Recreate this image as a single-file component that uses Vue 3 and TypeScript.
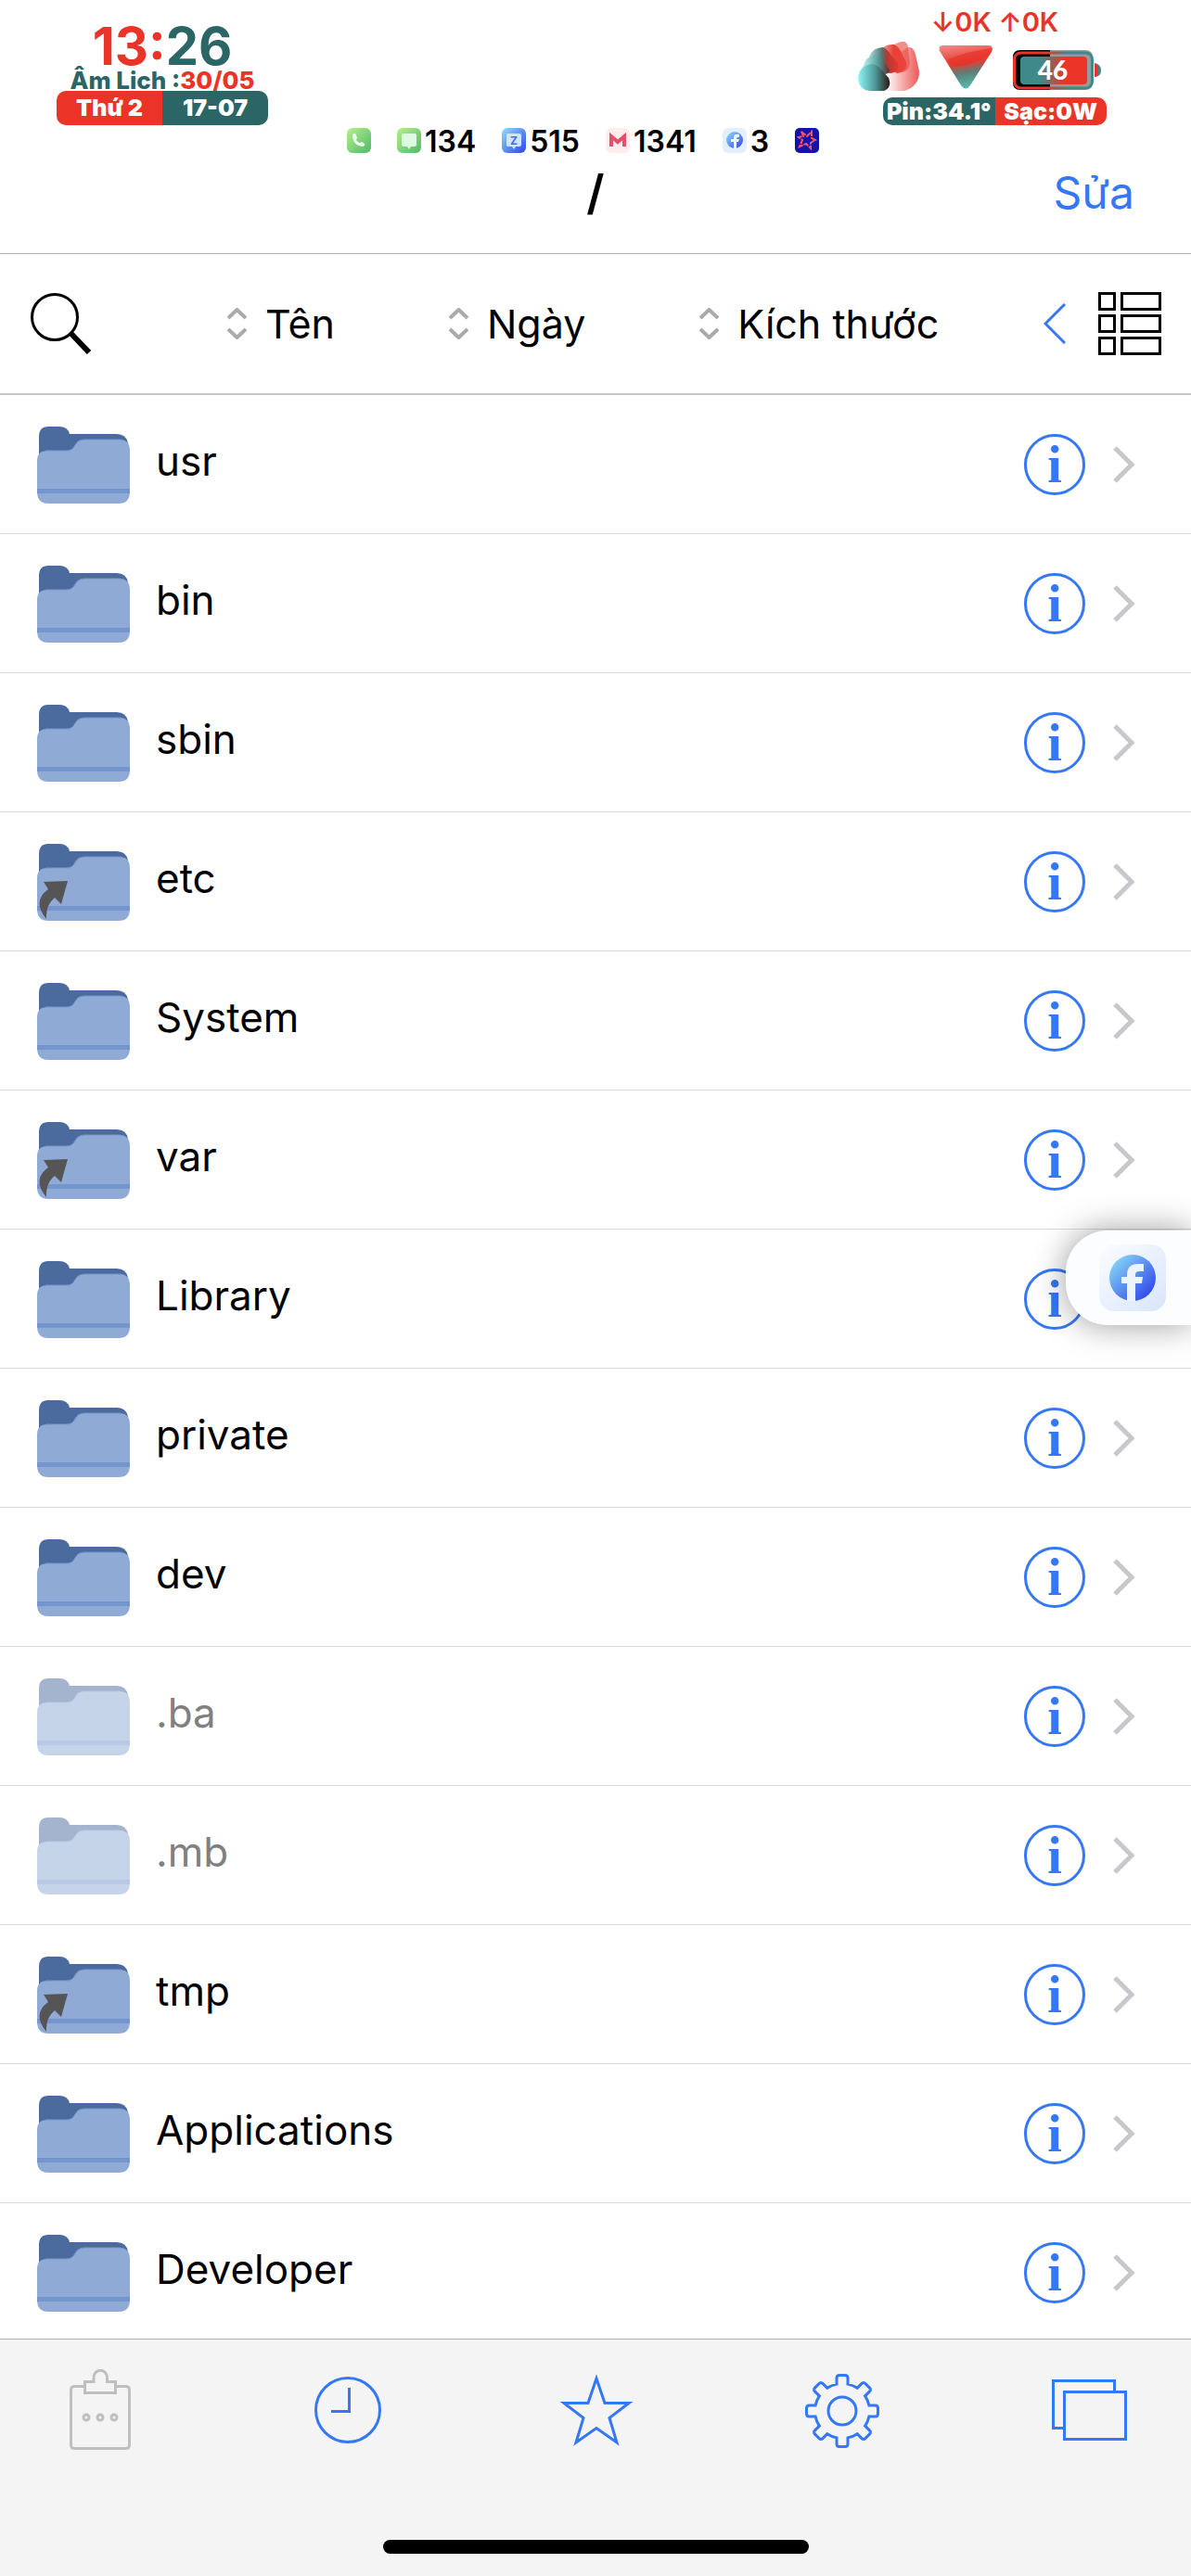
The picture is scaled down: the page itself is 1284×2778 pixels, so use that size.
<script setup lang="ts">
interface FileEntry {
  name: string
  link?: boolean
  hidden?: boolean
}

const files: FileEntry[] = [
  { name: 'usr' },
  { name: 'bin' },
  { name: 'sbin' },
  { name: 'etc', link: true },
  { name: 'System' },
  { name: 'var', link: true },
  { name: 'Library' },
  { name: 'private' },
  { name: 'dev' },
  { name: '.ba', hidden: true },
  { name: '.mb', hidden: true },
  { name: 'tmp', link: true },
  { name: 'Applications' },
  { name: 'Developer' },
]

const sorts: string[] = ['Tên', 'Ngày', 'Kích thước']

/* Outline of an eight-toothed gear with softened tooth corners. */
function gearPath(cx: number, cy: number): string {
  const body = 29.5
  const tip = 38.5
  const half = 6
  const round = 3
  const base = Math.sqrt(body * body - half * half)
  const parts: string[] = []
  for (let i = 0; i < 8; i++) {
    const a = (i * Math.PI) / 4
    const at = (x: number, r: number): string => {
      const px = cx + x * Math.cos(a) + r * Math.sin(a)
      const py = cy + x * Math.sin(a) - r * Math.cos(a)
      return `${px.toFixed(2)} ${py.toFixed(2)}`
    }
    parts.push(i === 0 ? `M${at(-half, base)}` : `A${body} ${body} 0 0 1 ${at(-half, base)}`)
    parts.push(`L${at(-half, tip - round)}Q${at(-half, tip)} ${at(-half + round, tip)}`)
    parts.push(`L${at(half - round, tip)}Q${at(half, tip)} ${at(half, tip - round)}L${at(half, base)}`)
  }
  const end = `${(cx - half).toFixed(2)} ${(cy - base).toFixed(2)}`
  return `${parts.join('')}A${body} ${body} 0 0 1 ${end}Z`
}

const gear = gearPath(40, 45)
</script>

<template>
  <div class="screen">
    <header class="top">
      <div class="status">
        <div class="clock">
          <div class="time"><span class="red">13:</span><span class="teal">26</span></div>
          <div class="lunar"><span class="teal">Âm Lịch :</span><span class="red">30/05</span></div>
          <div class="pill date-pill"><span class="on-red">Thứ 2</span><span class="on-teal">17-07</span></div>
        </div>

        <div class="notices">
          <span class="notice">
            <svg class="app" viewBox="0 0 26 27" aria-label="Phone">
              <defs>
                <linearGradient id="green" x1="0" y1="0" x2="1" y2="1"><stop offset="0" stop-color="#b5f08a" /><stop offset="1" stop-color="#4fb96b" /></linearGradient>
              </defs>
              <rect width="26" height="27" rx="6" fill="url(#green)" />
              <path d="M6 7q3-3 4 1l1 3q-1 1-1 2 2 3 4 3l2-1 3 2q1 2-2 3-11-1-11-13" fill="#edfff0" />
            </svg>
          </span>
          <span class="notice">
            <svg class="app" viewBox="0 0 26 27" aria-label="Messages">
              <rect width="26" height="27" rx="6" fill="url(#green)" />
              <path d="M7 6h12q2 0 2 2v10q0 2-2 2h-4l-2 3-2-3H7q-2 0-2-2V8q0-2 2-2" fill="#dcfbdf" />
            </svg>134
          </span>
          <span class="notice">
            <svg class="app" viewBox="0 0 26 27" aria-label="Zalo">
              <defs>
                <linearGradient id="blue" x1="0" y1="0" x2="1" y2="1"><stop offset="0" stop-color="#8fe0fa" /><stop offset="1" stop-color="#2f42ea" /></linearGradient>
              </defs>
              <rect width="26" height="27" rx="6" fill="url(#blue)" />
              <path d="M7 6h12q2 0 2 2v10q0 2-2 2h-4l-2 3-2-3H7q-2 0-2-2V8q0-2 2-2" fill="#cfe6fd" />
              <text x="13" y="18" text-anchor="middle" font-size="12" font-weight="700" fill="#3f6ceb">Z</text>
            </svg>515
          </span>
          <span class="notice">
            <svg class="app" viewBox="0 0 26 27" aria-label="Gmail">
              <rect width="26" height="27" rx="6" fill="#fdeeed" />
              <path d="M6 20V9l7 6 7-6v11" fill="none" stroke="#e2506b" stroke-width="4" />
            </svg>1341
          </span>
          <span class="notice">
            <svg class="app" viewBox="0 0 26 27" aria-label="Facebook">
              <rect width="26" height="27" rx="6" fill="#e4effd" />
              <circle cx="13" cy="13" r="9" fill="url(#blue)" />
              <path d="M12 22v-7H9v-3h3v-2q0-4 6-3v3q-3-1-3 2h3l-1 3h-2v7z" fill="#f2f8ff" />
            </svg>3
          </span>
          <span class="notice">
            <svg class="app" viewBox="0 0 26 27" aria-label="Star">
              <rect width="26" height="27" rx="5" fill="#1512a8" />
              <path d="M7 4l6 5 5-5v7l4 2-5 3v6l-5-5-7 3 3-7-4-3 5-1z" fill="none" stroke="#f0566b" stroke-width="2" stroke-dasharray="6 1" />
            </svg>
          </span>
        </div>

        <div class="meters">
          <div class="net">↓0K ↑0K</div>
          <div class="signals">
            <svg class="fist" viewBox="0 0 66 53" aria-label="Signal">
              <defs>
                <linearGradient id="k1"><stop offset="0" stop-color="#8ff6f6" /><stop offset=".55" stop-color="#4c9696" /><stop offset="1" stop-color="#2c1616" /></linearGradient>
                <linearGradient id="k2"><stop offset="0" stop-color="#c4f4f2" /><stop offset=".55" stop-color="#5aa3a1" /><stop offset="1" stop-color="#5e2b29" /></linearGradient>
                <linearGradient id="k3"><stop offset="0" stop-color="#b8dedd" /><stop offset=".45" stop-color="#4e7675" /><stop offset=".6" stop-color="#b23a33" /><stop offset="1" stop-color="#e3372c" /></linearGradient>
                <linearGradient id="k4"><stop offset="0" stop-color="#e9b5b3" /><stop offset=".5" stop-color="#ea3f36" /><stop offset="1" stop-color="#e9453f" /></linearGradient>
                <linearGradient id="palm"><stop offset=".1" stop-color="#fdf0f0" /><stop offset="1" stop-color="#ec5856" /></linearGradient>
              </defs>
              <path d="M30 53L34 20 54 6q6-1 8 8l4 18q0 16-16 21z" fill="url(#palm)" />
              <path d="M33 6Q44-1 50 0q4 1 4 8l2 16q-2 10-12 9z" fill="url(#k4)" opacity=".6" />
              <path d="M24 10Q28 2 39 3q5 2 8 9l5 10q2 10-10 12L26 24z" fill="url(#k4)" />
              <path d="M12 16Q16 6 27 6q5 2 9 9l7 9q2 9-9 10L16 26z" fill="url(#k3)" />
              <path d="M5 28Q8 16 18 14q5 1 9 6 5 5 7 11-1 6-12 3L8 36z" fill="url(#k2)" />
              <path d="M0 37Q3 25 15 24q5 0 10 6l8 9q4 10-5 14H13Q0 52 0 37" fill="url(#k1)" />
            </svg>
            <svg class="wedge" viewBox="0 0 58 47" aria-label="Wi-Fi">
              <defs>
                <linearGradient id="wedge" x1=".3" y1="0" x2=".5" y2="1"><stop offset="0" stop-color="#ee8481" /><stop offset=".4" stop-color="#e93a2e" /><stop offset=".65" stop-color="#5c7f78" /><stop offset="1" stop-color="#55bdb2" /></linearGradient>
              </defs>
              <path d="M5 0H53q7 0 4 7L34 43q-5 7-10 0L1 6Q-1 0 5 0" fill="url(#wedge)" />
              <path d="M10 15Q32 6 57 3q0 4-2 7-19 12-37 13-6-1-8-8" fill="#e6332a" opacity=".7" />
            </svg>
            <svg class="battery" viewBox="0 0 96 44" aria-label="Battery 46">
              <defs>
                <linearGradient id="ring"><stop offset="0" stop-color="#ea3427" /><stop offset=".4" stop-color="#ea3427" /><stop offset=".7" stop-color="#3d8a89" /><stop offset="1" stop-color="#3d8a89" /></linearGradient>
                <linearGradient id="fill"><stop offset="0" stop-color="#3d8a89" /><stop offset=".3" stop-color="#3d8a89" /><stop offset=".65" stop-color="#ea3427" /><stop offset="1" stop-color="#ea3427" /></linearGradient>
              </defs>
              <path d="M40 0H8Q0 0 0 8v27q0 8 8 8h32z" fill="#000" />
              <path d="M40 0h38q8 0 8 8v27q0 8-8 8H40z" fill="#999" />
              <rect x="1.500" y="3" width="84" height="38" rx="7" fill="none" stroke="url(#ring)" stroke-width="3" />
              <rect x="8" y="7" width="72" height="30" rx="4" fill="url(#fill)" />
              <path d="M88 14q7 1 7 8t-7 7z" fill="#3d8a89" />
              <path d="M88 14q4 1 4 8t-4 7z" fill="#ea3427" />
              <text x="43" y="32" text-anchor="middle" font-family="Lato, sans-serif" font-size="28" font-weight="900" fill="#fff">46</text>
            </svg>
          </div>
          <div class="pill power-pill"><span class="on-teal">Pin:34.1°</span><span class="on-red">Sạc:0W</span></div>
        </div>
      </div>

      <nav class="navbar">
        <h1 class="title">/</h1>
        <button class="edit" type="button">Sửa</button>
      </nav>
    </header>

    <div class="sortbar">
      <button class="plain" type="button" aria-label="Search">
        <svg class="search" viewBox="0 0 66 66" fill="none" stroke="#000">
          <circle cx="26" cy="26" r="24.500" stroke-width="3" />
          <path d="M43 43L63 64" stroke-width="6" />
        </svg>
      </button>
      <div class="sorts">
        <button v-for="s in sorts" :key="s" class="sort" type="button">
          <svg class="carets" viewBox="0 0 21 34" fill="none" stroke="#aaa" stroke-width="4">
            <path d="M1 11l9.500-9 9.500 9M1 23l9.500 9 9.500-9" />
          </svg>
          {{ s }}
        </button>
      </div>
      <div class="views">
        <button class="plain" type="button" aria-label="Back">
          <svg class="back" viewBox="0 0 24 44" fill="none" stroke="#3478f6" stroke-width="3">
            <path d="M23 1L2 22l21 21" />
          </svg>
        </button>
        <button class="plain" type="button" aria-label="View mode">
          <svg class="grid" viewBox="0 0 68 68" fill="none" stroke="#000" stroke-width="3">
            <path d="M1.500 1.500h16v17h-16zM25.500 1.500h41v17h-41zM1.500 25.500h16v17h-16zM25.500 25.500h41v17h-41zM1.500 49.500h16v17h-16zM25.500 49.500h41v17h-41z" />
          </svg>
        </button>
      </div>
    </div>

    <main class="body">
      <ul class="files">
        <li v-for="f in files" :key="f.name" class="row" :class="{ dim: f.hidden }">
          <a class="entry" href="#">
            <svg class="folder" viewBox="0 0 100 83">
              <path d="M2 34V11Q2 0 12 0H24Q33 0 35 8H86Q96 8 98 18V34Z" fill="#4b6b9f" />
              <path d="M0 37Q0 26 11 26H32Q38 26 41 20 44 14 51 14H89Q95 14 98 18 100 21 100 27V70Q100 83 88 83H12Q0 83 0 70Z" fill="#8eaad5" />
              <path d="M9 26H32Q38 26 41 20 44 14 51 14H90" fill="none" stroke="#7595cc" stroke-width="1" />
              <rect y="67" width="100" height="5" fill="#7595cd" />
              <path v-if="f.link" d="M7 41L33 40 26 65 19 58Q9 66 10 81-6 62 12 49Z" fill="#555" />
            </svg>
            <span class="name">{{ f.name }}</span>
          </a>
          <button class="info" type="button" :aria-label="`Info ${f.name}`">i</button>
          <svg class="more" viewBox="0 0 24 40" fill="none" stroke="#c7c7cc" stroke-width="5">
            <path d="M2 2l18 18L2 38" />
          </svg>
        </li>
      </ul>
    </main>

    <footer class="toolbar">
      <div class="tools">
        <button class="plain muted" type="button" aria-label="Clipboard" disabled>
          <svg class="tool" viewBox="0 0 82 88">
            <path d="M24.500 18.500H13.500q-4 0-4 4v59q0 4 4 4h55q4 0 4-4v-59q0-4-4-4H57.500" />
            <path d="M24.500 25.500v-12H34V9a7 7.500 0 0 1 14.500 0v4.500h9v12z" />
            <circle cx="26" cy="52" r="3" /><circle cx="41" cy="52" r="3" /><circle cx="56" cy="52" r="3" />
          </svg>
        </button>
        <button class="plain" type="button" aria-label="Recent">
          <svg class="tool" viewBox="0 0 82 88">
            <circle cx="41" cy="44" r="34.500" />
            <path d="M42.500 20v25.500H23" />
          </svg>
        </button>
        <button class="plain" type="button" aria-label="Favorites">
          <svg class="tool" viewBox="0 0 82 88">
            <path stroke-miterlimit="8" d="M42 10L51 36.500H77L56 52.500 64 79 42 63.500 20 79 28 52.500 7 36.500H33Z" />
          </svg>
        </button>
        <button class="plain" type="button" aria-label="Settings">
          <svg class="tool" viewBox="0 0 82 88">
            <path :d="gear" />
            <circle cx="40" cy="45" r="15" />
          </svg>
        </button>
        <button class="plain" type="button" aria-label="Windows">
          <svg class="tool windows" viewBox="0 0 82 88">
            <path d="M66.500 24.500v-12h-66v51h12" />
            <path d="M12.500 24.500h66v51h-66z" />
          </svg>
        </button>
      </div>
      <div class="home"></div>
    </footer>

    <button class="bubble" type="button" aria-label="Facebook">
      <svg class="tile" viewBox="0 0 72 72">
        <defs>
          <linearGradient id="tile" x1="0" y1="0" x2="1" y2="1"><stop offset="0" stop-color="#fbfcff" /><stop offset="1" stop-color="#d8e6fb" /></linearGradient>
          <linearGradient id="disc" x1="0" y1="0" x2="1" y2="1"><stop offset=".1" stop-color="#86d6f7" /><stop offset=".9" stop-color="#2f45ea" /></linearGradient>
        </defs>
        <rect width="72" height="72" rx="16" fill="url(#tile)" />
        <circle cx="36" cy="36" r="25" fill="url(#disc)" />
        <path d="M30 61V42h-6v-7h6v-2q0-12 12-12h6v8h-5q-4 0-4 4v2h8l-1 7h-7v19z" fill="#eef4fe" />
      </svg>
    </button>
  </div>
</template>

<style>
body {
  margin: 0;
  background: #fff;
}
</style>

<style scoped>
.screen {
  position: relative;
  display: flex;
  flex-direction: column;
  height: 100vh;
  overflow: hidden;
  background: #fff;
  color: #000;
  font-family: Inter, "Noto Sans", sans-serif;
}
button {
  padding: 0;
  border: 0;
  background: none;
  color: inherit;
  font: inherit;
}
svg {
  display: block;
  flex: none;
}
.red { color: #ea3427; }
.teal { color: #2b6565; }

.top {
  flex: none;
  border-bottom: 1px solid #b2b2b2;
}
.status {
  display: flex;
  align-items: flex-start;
  height: 168px;
  padding: 0 91px 0 61px;
}
.clock {
  display: flex;
  flex-direction: column;
  align-items: center;
  width: 228px;
  padding-top: 24px;
  white-space: nowrap;
}
.time {
  font-size: 56px;
  line-height: 52px;
  font-weight: 700;
}
.lunar {
  font-size: 26px;
  line-height: 22px;
  font-weight: 800;
}
.pill {
  display: flex;
  border-radius: 10px;
  overflow: hidden;
  color: #fff;
  font-size: 25px;
  font-weight: 900;
  text-align: center;
  white-space: nowrap;
}
.pill span { flex: 1; }
.on-red { background: #ea3427; }
.on-teal { background: #2b6565; }
.date-pill {
  width: 228px;
  line-height: 37px;
}
.power-pill {
  width: 241px;
  line-height: 30px;
}
.notices {
  display: flex;
  gap: 28px;
  margin-left: 85px;
  padding-top: 137px;
  font-size: 32px;
  line-height: 32px;
  font-weight: 600;
}
.notice {
  display: flex;
  align-items: center;
  gap: 4px;
}
.app {
  width: 26px;
  height: 27px;
  margin-bottom: 4px;
}
.meters {
  display: flex;
  flex-direction: column;
  align-items: flex-end;
  width: 268px;
  margin-left: auto;
  padding-top: 8px;
}
.net {
  width: 241px;
  color: #ea3427;
  font-size: 29px;
  line-height: 32px;
  font-weight: 600;
  text-align: center;
}
.signals {
  display: flex;
  align-items: flex-end;
  width: 100%;
  height: 58px;
  margin-bottom: 7px;
}
.fist { width: 66px; height: 53px; }
.wedge { width: 58px; height: 47px; margin: 0 22px 2px 21px; }
.battery { width: 96px; height: 44px; }

.navbar {
  display: grid;
  grid-template-columns: 1fr auto 1fr;
  align-items: center;
  height: 80px;
  padding: 0 61px 25px;
}
.title {
  grid-column: 2;
  margin: 0;
  font-size: 51px;
  line-height: 60px;
  font-weight: 600;
}
.edit {
  justify-self: end;
  color: #3478f6;
  font-size: 48px;
  line-height: 60px;
}

.sortbar {
  display: flex;
  flex: none;
  align-items: center;
  box-sizing: border-box;
  height: 152px;
  padding: 0 32px 0 33px;
  border-bottom: 2px solid #c8c8c8;
}
.search { width: 66px; height: 66px; }
.sorts {
  display: flex;
  gap: 123px;
  margin-left: 146px;
}
.sort {
  display: flex;
  align-items: center;
  gap: 20px;
  font-size: 43px;
  line-height: 56px;
  white-space: nowrap;
}
.carets { width: 21px; height: 34px; }
.views {
  display: flex;
  align-items: center;
  gap: 35px;
  margin-left: auto;
}
.back { width: 24px; height: 44px; }
.grid { width: 68px; height: 68px; }

.body {
  flex: 1;
  min-height: 0;
  overflow: hidden;
}
.files {
  margin: 0;
  padding: 0;
  list-style: none;
}
.row {
  display: flex;
  align-items: center;
  box-sizing: border-box;
  height: 150px;
  padding: 0 60px 0 40px;
  border-bottom: 1px solid #d9d9d9;
}
.entry {
  display: flex;
  flex: 1;
  align-items: center;
  gap: 28px;
  color: #000;
  text-decoration: none;
}
.folder { width: 100px; height: 83px; margin-top: 2px; }
.name {
  padding-bottom: 8px;
  font-size: 44px;
  line-height: 56px;
}
.dim .folder { opacity: 0.5; }
.dim .name { color: #808080; }
.info {
  width: 66px;
  height: 66px;
  margin-right: 30px;
  border: 3px solid #3478f6;
  border-radius: 50%;
  color: #3478f6;
  font-family: "Liberation Serif", serif;
  font-size: 56px;
  line-height: 60px;
  font-weight: 700;
  text-align: center;
}
.more { width: 24px; height: 40px; }

.toolbar {
  flex: none;
  border-top: 1px solid #b2b2b2;
  background: #f4f4f4;
}
.tools {
  display: flex;
  justify-content: space-between;
  padding: 32px 67px 96px;
}
.plain { color: #3478f6; }
.muted { color: #bfbfbf; }
.tool {
  width: 82px;
  height: 88px;
  fill: none;
  stroke: currentColor;
  stroke-width: 3px;
}
.windows { overflow: visible; }
.home {
  width: 459px;
  height: 15px;
  margin: 0 auto 24px;
  border-radius: 8px;
  background: #000;
}

/* Floating shortcut docked to the right edge, over the list. */
.bubble {
  position: absolute;
  top: 1327px;
  right: 0;
  width: 135px;
  height: 102px;
  padding-left: 36px;
  border-radius: 45px 0 0 45px;
  background: #fcfdff;
  box-shadow: 0 0 36px rgba(0, 0, 0, 0.4);
}
.tile { width: 72px; height: 72px; }
</style>
